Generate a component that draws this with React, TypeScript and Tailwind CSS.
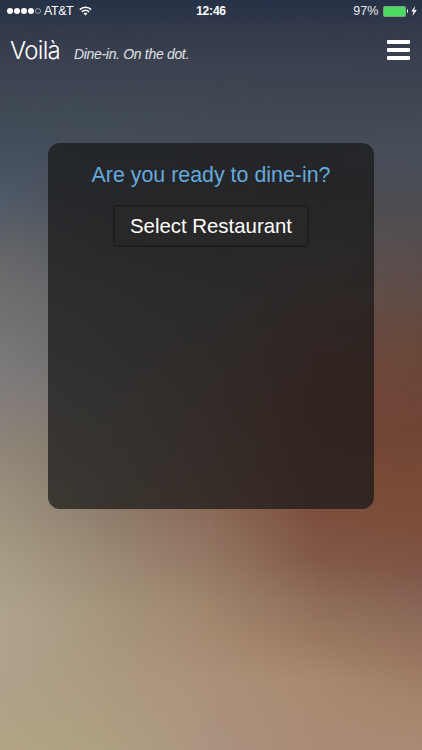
import React from "react";

const mesh = [
  "bg-[linear-gradient(180deg,#263247_0px,#333a4b_30px,#3a4150_60px,#404a55_110px,#454f5e_150px,#505a68_200px,#656668_250px,#6e6f70_300px,#78777a_350px,#847d7b_400px,#8f8678_450px,#9a917d_500px,#a69d84_560px,#b0a48f_620px,#afa28a_690px,#b3a484_750px)]",
  "bg-[linear-gradient(180deg,#263247_0px,#333a4b_30px,#3a4150_60px,#404a55_110px,#454e58_150px,#4b5058_200px,#565a60_250px,#656668_300px,#6c6b69_350px,#7a7571_400px,#83796b_450px,#8f7d6c_510px,#9c8a75_560px,#a6957c_610px,#ac9a80_680px,#afa082_750px)] [mask-image:linear-gradient(90deg,transparent_0px,black_105px)]",
  "bg-[linear-gradient(180deg,#263247_0px,#343a4b_30px,#3b4150_60px,#404952_110px,#454c58_150px,#4c4e54_200px,#565453_250px,#605e5e_300px,#6c605b_350px,#7a6157_400px,#80655a_450px,#8b6a58_510px,#947764_560px,#9d846b_600px,#a68a72_640px,#ac917a_680px,#ab9380_750px)] [mask-image:linear-gradient(90deg,transparent_105px,black_211px)]",
  "bg-[linear-gradient(180deg,#263247_0px,#343a4b_30px,#3b4150_60px,#404852_110px,#464d58_150px,#4d4c50_200px,#5a5453_250px,#67514b_300px,#704b42_350px,#734538_400px,#764837_450px,#7d503e_520px,#835a48_560px,#8f6c5a_600px,#9c7a61_640px,#a98a70_680px,#ab8b76_750px)] [mask-image:linear-gradient(90deg,transparent_211px,black_316px)]",
  "bg-[linear-gradient(180deg,#263247_0px,#343a4b_30px,#3b404f_60px,#404852_110px,#474e5a_150px,#4c4d52_200px,#574d4e_250px,#5f4b45_300px,#684839_350px,#6e4638_400px,#704535_430px,#774b37_480px,#7c4f3c_530px,#7f5647_570px,#8c6a59_620px,#997560_660px,#a5846c_700px,#aa8a74_750px)] [mask-image:linear-gradient(90deg,transparent_316px,black_422px)]",
];

function Backdrop() {
  return (
    <div className="absolute inset-0 -z-10">
      {mesh.map((layer) => (
        <div key={layer} className={`absolute inset-0 ${layer}`} />
      ))}
    </div>
  );
}

function StatusBar() {
  return (
    <div className="grid h-[22px] grid-cols-[1fr_auto_1fr] items-center pl-[7px] pr-[5px] text-[12.5px] leading-none">
      <div className="flex items-center">
        <div className="flex gap-[1px]">
          {[0, 1, 2, 3].map((i) => (
            <i key={i} className="size-[6px] rounded-full bg-white" />
          ))}
          <i className="size-[6px] rounded-full border-[0.5px] border-white/50" />
        </div>
        <span className="ml-[3px] w-[30px] whitespace-nowrap tracking-[-0.45px]">AT&amp;T</span>
        <svg className="ml-[5px]" width="13" height="10" viewBox="0 0 13 10" fill="none" stroke="white" strokeWidth="1.6">
          <path d="M.8 3.6a8.2 8.2 0 0 1 11.4 0M2.9 5.8a5.2 5.2 0 0 1 7.2 0" />
          <path d="M6.5 9.5 4.6 7.5a2.8 2.8 0 0 1 3.8 0Z" fill="white" stroke="none" />
        </svg>
      </div>
      <span className="relative -left-px text-[12px] font-bold tracking-[-0.2px]">12:46</span>
      <div className="flex items-center justify-end">
        <span className="tracking-[0.1px] text-white/90">97%</span>
        <span className="ml-[4px] h-[11px] w-[23px] rounded-[1.5px] border border-[#70a67c] bg-[#4cd964]" />
        <span className="ml-[1px] h-[4px] w-[1.5px] rounded-r-full bg-white/90" />
        <svg className="ml-[3px]" width="6" height="10" viewBox="0 0 6 10" fill="white">
          <path d="M4.2 0 .2 5.5h2.3L1.5 10l4.3-5.9H3.3Z" />
        </svg>
      </div>
    </div>
  );
}

function Header() {
  return (
    <header className="flex h-[56px] items-center justify-between pl-[10px] pr-[12px]">
      <div className="mt-[1px] flex items-baseline font-['Inter','Liberation_Sans',sans-serif]">
        <h1 className="w-[64px] text-[24px] font-light leading-none tracking-[-0.7px]">Voilà</h1>
        <span className="whitespace-nowrap font-['Liberation_Sans',Arial,sans-serif] text-[14px] font-light italic leading-none tracking-[-0.32px] text-white/85">
          Dine-in. On the dot.
        </span>
      </div>
      <button aria-label="Menu" className="flex w-[23px] flex-col gap-[4px]">
        <i className="h-[4px] rounded-[1px] bg-white" />
        <i className="h-[4px] rounded-[1px] bg-white" />
        <i className="h-[4px] rounded-[1px] bg-white" />
      </button>
    </header>
  );
}

export default function App() {
  return (
    <div className="relative isolate h-[750px] w-[422px] overflow-hidden font-['Liberation_Sans',Arial,sans-serif] text-white">
      <Backdrop />
      <StatusBar />
      <Header />
      <main className="mx-[48px] mt-[65px] flex h-[366px] flex-col items-center rounded-[12px] bg-[#151515]/70 pt-[19px]">
        <h2 className="whitespace-nowrap text-[21.4px] leading-[26px] text-[#66a9df]">Are you ready to dine-in?</h2>
        <button className="mt-[17px] h-[42px] w-[196px] whitespace-nowrap rounded-[4px] border border-[#1a1a1a] bg-[#292828] text-[20.4px] leading-[39px] shadow-[inset_0_0_2px_rgba(0,0,0,0.4)]">
          Select Restaurant
        </button>
      </main>
    </div>
  );
}
